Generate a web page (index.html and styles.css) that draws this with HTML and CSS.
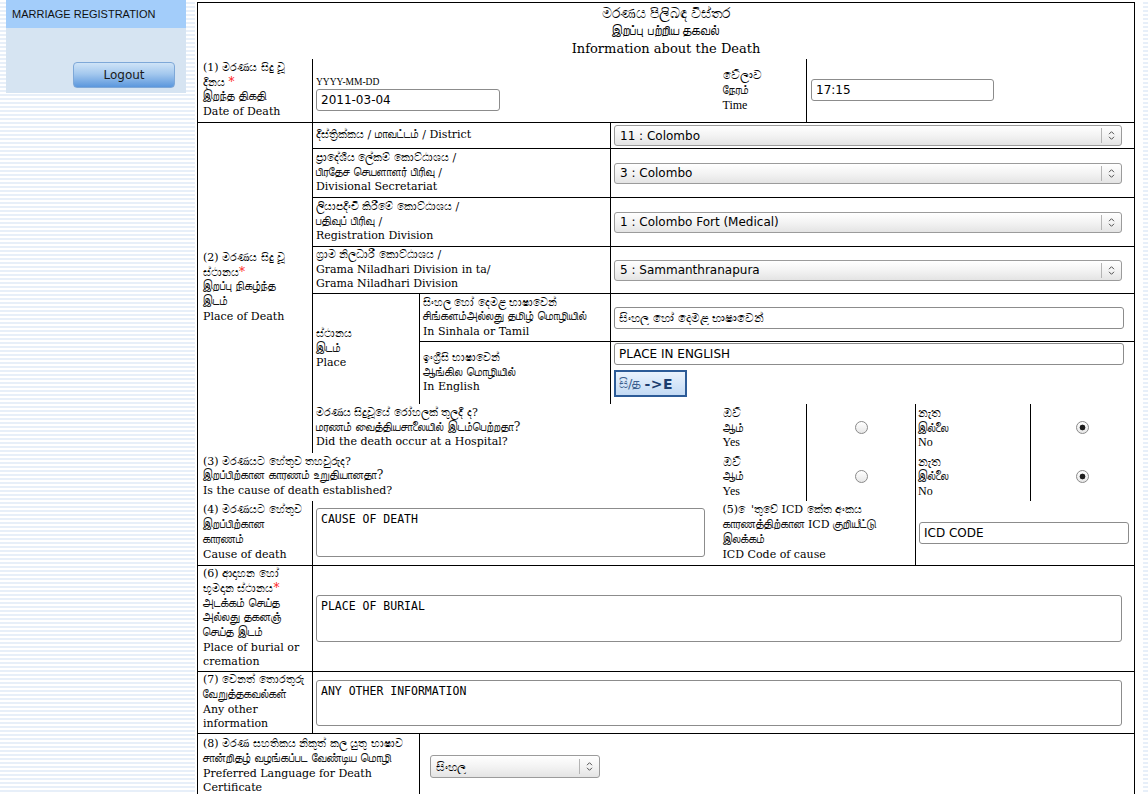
FILE: index.html
```html
<!DOCTYPE html>
<html lang="si">
<head>
<meta charset="utf-8">
<title>Death Registration</title>
<link rel="stylesheet" href="styles.css">
</head>
<body>
<div class="page">
  <aside class="side">
    <div class="side-title">MARRIAGE REGISTRATION</div>
    <div class="side-panel"><button class="logout" type="button">Logout</button></div>
  </aside>
  <main class="main">
    <table class="form">
      <colgroup>
        <col class="c1"><col class="c2"><col class="c3"><col class="c4"><col class="c5"><col class="c6"><col class="c7"><col class="c8">
      </colgroup>
      <tr class="r-head">
        <td colspan="8" class="head">
          <div class="h-si">මරණය පිලිබඳ විස්තර</div>
          <div class="h-ta">இறப்பு பற்றிய தகவல்</div>
          <div class="h-en">Information about the Death</div>
        </td>
      </tr>
      <tr class="r1">
        <td class="lbl">(1) මරණය සිදු වූ<br>දිනය <span class="req">*</span><br><span class="ta">இறந்த திகதி</span><br>Date of Death</td>
        <td colspan="3" class="date-cell nbr">
          <div class="fmt">YYYY-MM-DD</div>
          <input class="txt date" type="text" value="2011-03-04">
        </td>
        <td class="time-lbl">වේලාව<br><span class="ta">நேரம்</span><br>Time</td>
        <td colspan="3" class="time-cell"><input class="txt time" type="text" value="17:15"></td>
      </tr>
      <tr class="r-dist">
        <td rowspan="7" class="lbl nbb">(2) මරණය සිදු වූ<br>ස්ථානය<span class="req">*</span><br><span class="ta">இறப்பு நிகழ்ந்த</span><br><span class="ta">இடம்</span><br>Place of Death</td>
        <td colspan="2" class="sub">දිස්ත්‍රික්කය / <span class="ta">மாவட்டம்</span> / District</td>
        <td colspan="5" class="ctl">
          <div class="sel"><span class="sel-text">11 : Colombo</span><span class="sel-btn"><svg width="7" height="11" viewBox="0 0 7 11"><path d="M1 4.2 L3.5 1.7 L6 4.2 M1 6.8 L3.5 9.3 L6 6.8" fill="none" stroke="#505050" stroke-width="1"/></svg></span></div>
        </td>
      </tr>
      <tr class="r-ds">
        <td colspan="2" class="sub">ප්‍රාදේශීය ලේකම් කොට්ඨාශය /<br><span class="ta">பிரதேச செயளாளர் பிரிவு</span> /<br>Divisional Secretariat</td>
        <td colspan="5" class="ctl">
          <div class="sel"><span class="sel-text">3 : Colombo</span><span class="sel-btn"><svg width="7" height="11" viewBox="0 0 7 11"><path d="M1 4.2 L3.5 1.7 L6 4.2 M1 6.8 L3.5 9.3 L6 6.8" fill="none" stroke="#505050" stroke-width="1"/></svg></span></div>
        </td>
      </tr>
      <tr class="r-rd">
        <td colspan="2" class="sub">ලියාපදිංචි කිරීමේ කොට්ඨාශය /<br><span class="ta">பதிவுப் பிரிவு</span> /<br>Registration Division</td>
        <td colspan="5" class="ctl">
          <div class="sel"><span class="sel-text">1 : Colombo Fort (Medical)</span><span class="sel-btn"><svg width="7" height="11" viewBox="0 0 7 11"><path d="M1 4.2 L3.5 1.7 L6 4.2 M1 6.8 L3.5 9.3 L6 6.8" fill="none" stroke="#505050" stroke-width="1"/></svg></span></div>
        </td>
      </tr>
      <tr class="r-gn">
        <td colspan="2" class="sub">ග්‍රාම නිලධාරී කොට්ඨාශය /<br>Grama Niladhari Division in ta/<br>Grama Niladhari Division</td>
        <td colspan="5" class="ctl">
          <div class="sel"><span class="sel-text">5 : Sammanthranapura</span><span class="sel-btn"><svg width="7" height="11" viewBox="0 0 7 11"><path d="M1 4.2 L3.5 1.7 L6 4.2 M1 6.8 L3.5 9.3 L6 6.8" fill="none" stroke="#505050" stroke-width="1"/></svg></span></div>
        </td>
      </tr>
      <tr class="r-si">
        <td rowspan="2" class="sub nbb">ස්ථානය<br><span class="ta">இடம்</span><br>Place</td>
        <td class="sub">සිංහල හෝ දෙමළ භාෂාවෙන්<br><span class="ta">சிங்களம்அல்லது தமிழ் மொழியில்</span><br>In Sinhala or Tamil</td>
        <td colspan="5" class="ctl"><input class="txt wide" type="text" value="සිංහල හෝ දෙමළ භාෂාවෙන්"></td>
      </tr>
      <tr class="r-en">
        <td class="sub nbb">ඉංග්‍රීසි භාෂාවෙන්<br><span class="ta">ஆங்கில மொழியில்</span><br>In English</td>
        <td colspan="5" class="ctl top nbb">
          <input class="txt wide" type="text" value="PLACE IN ENGLISH">
          <button class="conv" type="button"><span class="conv-si">සි/த</span> <b>-&gt;E</b></button>
        </td>
      </tr>
      <tr class="r-hosp">
        <td colspan="3" class="sub nbt nbb nbr">මරණය සිදුවූයේ රෝහලක් තුලදී ද?<br><span class="ta">மரணம் வைத்தியசாலையில் இடம்பெற்றதா?</span><br>Did the death occur at a Hospital?</td>
        <td class="yn nbt nbb">ඔව්<br><span class="ta">ஆம்</span><br>Yes</td>
        <td class="rad nbt nbb"><input type="radio" name="hosp" class="radio"></td>
        <td class="yn nbt nbb">නැත<br><span class="ta">இல்லை</span><br>No</td>
        <td class="rad nbt nbb"><input type="radio" name="hosp" class="radio" checked></td>
      </tr>
      <tr class="r-est">
        <td colspan="4" class="lbl nbt nbb nbr">(3) මරණයට හේතුව තහවුරුද?<br><span class="ta">இறப்பிற்கான காரணம் உறுதியானதா?</span><br>Is the cause of death established?</td>
        <td class="yn nbt nbb">ඔව්<br><span class="ta">ஆம்</span><br>Yes</td>
        <td class="rad nbt nbb"><input type="radio" name="est" class="radio"></td>
        <td class="yn nbt nbb">නැත<br><span class="ta">இல்லை</span><br>No</td>
        <td class="rad nbt nbb"><input type="radio" name="est" class="radio" checked></td>
      </tr>
      <tr class="r-cause">
        <td class="lbl nbt">(4) මරණයට හේතුව<br><span class="ta">இறப்பிற்கான</span><br><span class="ta">காரணம்</span><br>Cause of death</td>
        <td colspan="3" class="ctl nbt nbr"><textarea class="area cause">CAUSE OF DEATH</textarea></td>
        <td colspan="2" class="sub icd-lbl nbt">(5) ෙ'තුවේ ICD කේත අංකය<br><span class="ta">காரணத்திற்கான</span> ICD <span class="ta">குறியீட்டு</span><br><span class="ta">இலக்கம்</span><br>ICD Code of cause</td>
        <td colspan="2" class="ctl nbt"><input class="txt icd" type="text" value="ICD CODE"></td>
      </tr>
      <tr class="r-burial">
        <td class="lbl">(6) ආදාහන හෝ<br>භූමදාන ස්ථානය<span class="req">*</span><br><span class="ta">அடக்கம் செய்த</span><br><span class="ta">அல்லது தகனஞ்</span><br><span class="ta">செய்த இடம்</span><br>Place of burial or<br>cremation</td>
        <td colspan="7" class="ctl"><textarea class="area long">PLACE OF BURIAL</textarea></td>
      </tr>
      <tr class="r-other">
        <td class="lbl">(7) වෙනත් තොරතුරු<br><span class="ta">வேறுத்தகவல்கள்</span><br>Any other<br>information</td>
        <td colspan="7" class="ctl"><textarea class="area long other">ANY OTHER INFORMATION</textarea></td>
      </tr>
      <tr class="r-lang">
        <td colspan="2" class="lbl">(8) මරණ සහතිකය නිකුත් කල යුතු භාෂාව<br><span class="ta">சான்றிதழ் வழங்கப்பட வேண்டிய மொழி</span><br>Preferred Language for Death<br>Certificate</td>
        <td colspan="6" class="ctl lang-cell">
          <div class="sel small"><span class="sel-text">සිංහල</span><span class="sel-btn"><svg width="7" height="11" viewBox="0 0 7 11"><path d="M1 4.2 L3.5 1.7 L6 4.2 M1 6.8 L3.5 9.3 L6 6.8" fill="none" stroke="#505050" stroke-width="1"/></svg></span></div>
        </td>
      </tr>
    </table>
  </main>
</div>
</body>
</html>
```

FILE: styles.css
```css
* { box-sizing: border-box; }

html, body {
  margin: 0;
  padding: 0;
}

body {
  height: 794px;
  overflow: hidden;
  background: repeating-linear-gradient(to bottom, #ffffff 0 2px, #e7eff9 2px 4px);
  font-family: "DejaVu Serif", "Noto Sans", serif;
  color: #000;
}

.page {
  display: flex;
  align-items: flex-start;
  padding-left: 6px;
}

/* ---------- sidebar ---------- */
.side {
  width: 180px;
  flex: none;
}

.side-title {
  height: 28px;
  padding-left: 6px;
  background: #a3cdfa;
  font: 11px/28px "Liberation Sans", Arial, sans-serif;
  color: #111;
}

.side-panel {
  height: 65px;
  background: #d6e4f2;
  display: flex;
  justify-content: flex-end;
  align-items: flex-start;
  padding: 34px 11px 0 0;
}

.logout {
  width: 102px;
  height: 26px;
  border: 1px solid #7ea8d8;
  border-radius: 4px;
  background: linear-gradient(to bottom, #cfe3f7 0%, #a4c8ee 45%, #5b97dd 100%);
  font: 12px "DejaVu Sans", sans-serif;
  color: #1a1a1a;
  padding: 0;
}

/* ---------- main ---------- */
.main {
  margin-left: 9px;
  width: 948px;
  min-height: 794px;
  background: #fff;
  padding: 2px 0 0 2px;
}

.form {
  width: 937px;
  table-layout: fixed;
  border-collapse: collapse;
  border: 1px solid #000;
}

.c1 { width: 115px; }
.c2 { width: 107px; }
.c3 { width: 191px; }
.c4 { width: 110px; }
.c5 { width: 86px; }
.c6 { width: 109px; }
.c7 { width: 115px; }
.c8 { width: 104px; }

.form td {
  border: 1px solid #000;
  padding: 1px 3px;
  vertical-align: middle;
  font-size: 11px;
  line-height: 14.7px;
  text-align: left;
}

.ta {
  font-size: 12.3px;
  line-height: 8px;
  color: #111;
}

.form td.nbt { border-top-style: hidden; }
.form td.nbb { border-bottom-style: hidden; }
.form td.nbr { border-right-style: hidden; }

.form td.lbl { padding-left: 5px; }

.req {
  color: #f22;
  font-size: 12px;
  line-height: 8px;
  vertical-align: 0;
}

/* header */
.form td.head {
  text-align: center;
  vertical-align: top;
  border-bottom-style: hidden;
  padding: 2px 0 0;
  line-height: 17px;
}
.h-si { font-size: 14px; }
.h-ta { font-size: 12.5px; }
.h-en { font-size: 13px; padding-top: 1px; }

.r-head { height: 56px; }
.r1 { height: 64px; }
.r-dist { height: 26px; }
.r-ds { height: 49px; }
.r-rd { height: 49px; }
.r-gn { height: 47px; }
.r-si { height: 48px; }
.r-en { height: 62px; }
.r-hosp { height: 49px; }
.r-est { height: 48px; }
.r-cause { height: 65px; }
.r-burial { height: 105px; }
.r-other { height: 62px; }
.r-lang { height: 66px; }

/* date / time */
.form td.date-cell { padding: 6px 3px 0 3px; }
.fmt {
  font: 9.5px/12px "Liberation Serif", serif;
  margin-bottom: 1px;
}
.time-lbl {
  font-family: "Liberation Serif", serif;
}
.form td.time-lbl { padding-left: 2px; font-size: 12px; }
.form td.time-cell { padding: 0 4px; vertical-align: middle; }

.txt {
  display: block;
  height: 22px;
  border: 1px solid #8c8c8c;
  border-radius: 3px;
  background: #fff;
  font: 12px "DejaVu Sans", sans-serif;
  color: #000;
  padding: 0 4px;
  margin: 0;
}
.date { width: 184px; }
.time { width: 183px; margin-top: -1px; }
.wide { width: 510px; }
.icd { width: 210px; }

.form td.ctl { padding: 2px 3px; }
.form td.ctl.top { vertical-align: top; padding-top: 1px; }
.form td.sub { padding-left: 3px; }
.form td.icd-lbl { padding-left: 2px; }

/* select */
.sel {
  display: flex;
  align-items: center;
  width: 508px;
  height: 21px;
  border: 1px solid #9b9b9b;
  border-radius: 3px;
  background: linear-gradient(to bottom, #ffffff 0%, #f3f3f3 50%, #e4e4e4 100%);
  font: 12px "DejaVu Sans", sans-serif;
  color: #000;
}
.sel.small { width: 170px; height: 23px; }
.sel-text {
  flex: 1;
  padding-left: 5px;
  white-space: nowrap;
  overflow: hidden;
}
.sel-btn {
  width: 20px;
  height: 15px;
  border-left: 1px solid #b4b4b4;
  display: flex;
  align-items: center;
  justify-content: center;
}
.form td.lang-cell { padding-left: 10px; }

/* converter button */
.conv {
  display: flex;
  align-items: center;
  gap: 3px;
  margin-top: 5px;
  width: 73px;
  height: 27px;
  border: 2px solid #2c5b97;
  background: linear-gradient(to bottom, #eaf3fd, #c3daf4);
  padding: 0 0 0 3px;
  font: 14px "DejaVu Sans", sans-serif;
  color: #1c3d6e;
}
.conv-si { color: #3b5f8e; font-size: 13px; }
.conv b { font-weight: bold; letter-spacing: 0.5px; }

/* yes/no radios */
.yn { font-family: "Liberation Serif", "DejaVu Serif", serif; }
.form td.yn { padding-left: 2px; font-size: 12px; }
.form td.rad { text-align: center; }

.radio {
  -webkit-appearance: none;
  appearance: none;
  width: 13px;
  height: 13px;
  margin: 0;
  border: 1px solid #8a8a8a;
  border-radius: 50%;
  background: linear-gradient(to bottom, #ffffff, #e7e7e7);
  vertical-align: middle;
}
.radio:checked {
  background: radial-gradient(circle, #1e1e1e 0 2.6px, transparent 3.2px), linear-gradient(to bottom, #ffffff, #e7e7e7);
}

/* textareas */
.area {
  display: block;
  resize: none;
  border: 1px solid #8c8c8c;
  border-radius: 3px;
  background: #fff;
  font: 11.5px/14px "DejaVu Sans Mono", monospace;
  color: #000;
  padding: 3px 4px;
  margin: 0;
  overflow: hidden;
}
.cause { width: 389px; height: 49px; }
.long { width: 806px; height: 47px; }
.other { height: 46px; }
```
